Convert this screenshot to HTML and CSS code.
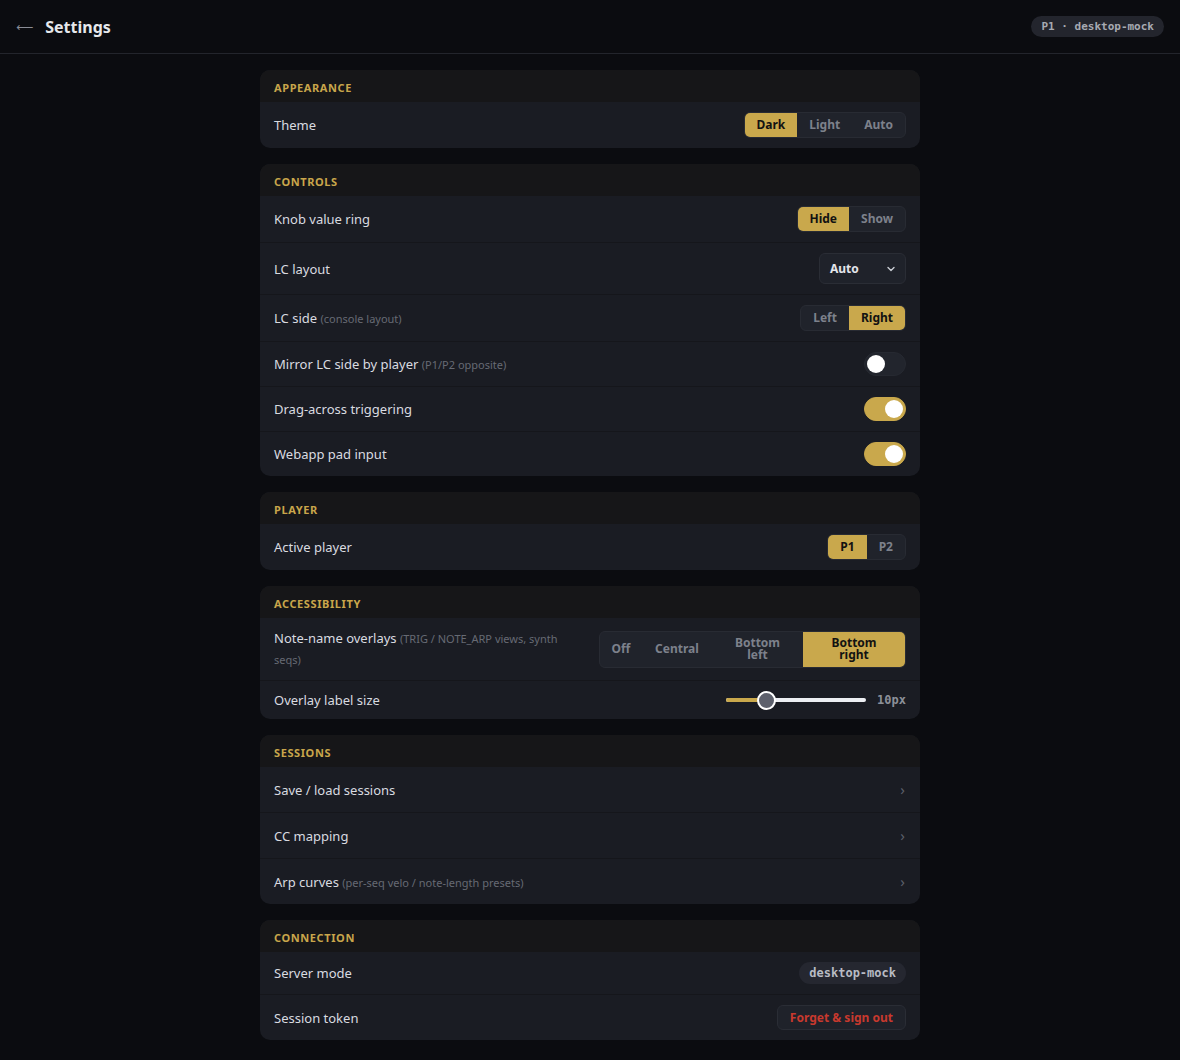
FILE: index.html
```html
<!DOCTYPE html>
<html lang="en">
<head>
<meta charset="utf-8">
<title>Settings</title>
<link rel="stylesheet" href="styles.css">
</head>
<body>
<header class="topbar">
  <div class="topbar-left">
    <span class="back">⟵</span>
    <h1 class="title">Settings</h1>
  </div>
  <span class="pill">P1 · desktop-mock</span>
</header>

<main class="page">
  <section class="card">
    <div class="card-head">Appearance</div>
    <div class="row">
      <div class="label">Theme</div>
      <div class="seg">
        <span class="seg-btn active">Dark</span>
        <span class="seg-btn">Light</span>
        <span class="seg-btn">Auto</span>
      </div>
    </div>
  </section>

  <section class="card">
    <div class="card-head">Controls</div>
    <div class="row">
      <div class="label">Knob value ring</div>
      <div class="seg">
        <span class="seg-btn active">Hide</span>
        <span class="seg-btn">Show</span>
      </div>
    </div>
    <div class="row">
      <div class="label">LC layout</div>
      <div class="select">
        <span>Auto</span>
        <svg class="chev-down" width="10" height="10" viewBox="0 0 10 10"><path d="M2 3.5 L5 6.5 L8 3.5" fill="none" stroke="#c9ccd3" stroke-width="1.4" stroke-linecap="round" stroke-linejoin="round"/></svg>
      </div>
    </div>
    <div class="row">
      <div class="label">LC side <span class="hint">(console layout)</span></div>
      <div class="seg">
        <span class="seg-btn">Left</span>
        <span class="seg-btn active">Right</span>
      </div>
    </div>
    <div class="row">
      <div class="label">Mirror LC side by player <span class="hint">(P1/P2 opposite)</span></div>
      <div class="toggle"><span class="knob"></span></div>
    </div>
    <div class="row">
      <div class="label">Drag-across triggering</div>
      <div class="toggle on"><span class="knob"></span></div>
    </div>
    <div class="row">
      <div class="label">Webapp pad input</div>
      <div class="toggle on"><span class="knob"></span></div>
    </div>
  </section>

  <section class="card">
    <div class="card-head">Player</div>
    <div class="row">
      <div class="label">Active player</div>
      <div class="seg">
        <span class="seg-btn active">P1</span>
        <span class="seg-btn">P2</span>
      </div>
    </div>
  </section>

  <section class="card">
    <div class="card-head">Accessibility</div>
    <div class="row">
      <div class="label label-wrap">Note-name overlays <span class="hint">(TRIG / NOTE_ARP views, synth seqs)</span></div>
      <div class="seg seg-wide">
        <span class="seg-btn w-off">Off</span>
        <span class="seg-btn w-central">Central</span>
        <span class="seg-btn w-bl">Bottom<br>left</span>
        <span class="seg-btn w-br active">Bottom<br>right</span>
      </div>
    </div>
    <div class="row row-slim">
      <div class="label">Overlay label size</div>
      <div class="slider-wrap">
        <div class="slider">
          <div class="slider-fill" style="width: 40px"></div>
          <div class="slider-thumb" style="left: 40px"></div>
        </div>
        <span class="mono-val">10px</span>
      </div>
    </div>
  </section>

  <section class="card">
    <div class="card-head">Sessions</div>
    <div class="row">
      <div class="label">Save / load sessions</div>
      <span class="chev">›</span>
    </div>
    <div class="row">
      <div class="label">CC mapping</div>
      <span class="chev">›</span>
    </div>
    <div class="row">
      <div class="label">Arp curves <span class="hint">(per-seq velo / note-length presets)</span></div>
      <span class="chev">›</span>
    </div>
  </section>

  <section class="card">
    <div class="card-head">Connection</div>
    <div class="row">
      <div class="label">Server mode</div>
      <span class="mode-pill">desktop-mock</span>
    </div>
    <div class="row">
      <div class="label">Session token</div>
      <span class="danger-btn">Forget &amp; sign out</span>
    </div>
  </section>
</main>
</body>
</html>
```

FILE: styles.css
```css
* { box-sizing: border-box; }

html, body {
  margin: 0;
  padding: 0;
  background: #0b0c10;
  color: #d9dbe0;
  font-family: "Noto Sans", "Open Sans", "DejaVu Sans", sans-serif;
}

/* top bar */
.topbar {
  height: 54px;
  display: flex;
  align-items: center;
  justify-content: space-between;
  padding: 0 16px;
  border-bottom: 1px solid #23252c;
  background: #0b0c10;
}
.topbar-left {
  display: flex;
  align-items: center;
  gap: 12px;
}
.back {
  color: #8a8d96;
  font-size: 12px;
  font-family: "DejaVu Sans", sans-serif;
  line-height: 1;
}
.title {
  margin: 0;
  font-size: 16px;
  font-weight: 700;
  color: #e6e8ec;
}
.pill {
  background: #23252d;
  color: #a7aab2;
  border-radius: 11px;
  padding: 3px 10px;
  font-family: "DejaVu Sans Mono", "Liberation Mono", monospace;
  font-size: 11px;
  font-weight: 700;
  line-height: 15px;
}

/* content column */
.page {
  width: 660px;
  margin: 0 auto;
  padding: 16px 0 20px;
  display: flex;
  flex-direction: column;
  gap: 16px;
}

.card {
  background: #1a1c23;
  border-radius: 10px;
  overflow: hidden;
}
.card-head {
  background: #161618;
  color: #c9a64b;
  font-size: 11px;
  font-weight: 700;
  letter-spacing: 0.6px;
  text-transform: uppercase;
  padding: 12px 14px 8px;
  line-height: 12px;
}

.row {
  display: flex;
  align-items: center;
  justify-content: space-between;
  gap: 14px;
  padding: 10px 14px;
  border-top: 1px solid #15161b;
}
.card-head + .row { border-top: none; }
.row-slim { padding-top: 9px; padding-bottom: 9px; }

.label {
  font-size: 13px;
  line-height: 20px;
  color: #d9dbe0;
  flex: 1 1 auto;
  min-width: 0;
}
.label-wrap { line-height: 21px; }
.hint {
  font-size: 11px;
  line-height: 1;
  color: #666a73;
}

/* segmented control */
.seg {
  display: flex;
  flex: none;
  background: #20232b;
  border: 1px solid #282b33;
  border-radius: 6px;
  overflow: hidden;
}
.seg-btn {
  padding: 4px 12px;
  font-size: 12px;
  font-weight: 700;
  line-height: 16px;
  color: #7d818b;
  text-align: center;
  display: flex;
  align-items: center;
  justify-content: center;
}
.seg-btn.active {
  background: #c9a84c;
  color: #121212;
}
.seg-wide { width: 307px; }
.seg-wide .seg-btn {
  line-height: 12.5px;
  padding: 5px 8px;
  height: 35px;
}
.w-off { width: 42px; }
.w-central { width: 70px; }
.w-bl { width: 91px; }
.w-br { width: 102px; }

/* select */
.select {
  flex: none;
  width: 87px;
  height: 31px;
  display: flex;
  align-items: center;
  justify-content: space-between;
  padding: 0 9px 0 10px;
  background: #1f222a;
  border: 1px solid #2a2d35;
  border-radius: 6px;
  font-size: 12px;
  font-weight: 700;
  color: #e3e5ea;
}

/* toggle switch */
.toggle {
  flex: none;
  width: 42px;
  height: 24px;
  border-radius: 12px;
  background: #22252d;
  border: 1px solid #262931;
  position: relative;
}
.toggle .knob {
  position: absolute;
  top: 2px;
  left: 2px;
  width: 18px;
  height: 18px;
  border-radius: 50%;
  background: #ffffff;
}
.toggle.on {
  background: #c9a84c;
  border-color: #c9a84c;
}
.toggle.on .knob {
  left: 20px;
}

/* slider */
.slider-wrap {
  flex: none;
  display: flex;
  align-items: center;
  gap: 11px;
}
.slider {
  position: relative;
  width: 140px;
  height: 4px;
  border-radius: 2px;
  background: #eceef2;
}
.slider-fill {
  position: absolute;
  left: 0;
  top: 0;
  bottom: 0;
  border-radius: 2px;
  background: #c9a84c;
}
.slider-thumb {
  position: absolute;
  top: 50%;
  width: 19px;
  height: 19px;
  margin-left: -9px;
  margin-top: -9.5px;
  border-radius: 50%;
  background: #5d606c;
  border: 2px solid #ffffff;
}
.mono-val {
  font-family: "DejaVu Sans Mono", "Liberation Mono", monospace;
  font-size: 12px;
  font-weight: 700;
  color: #8c9099;
}

/* chevrons */
.chev {
  color: #5b5f69;
  font-size: 15px;
  line-height: 25px;
  height: 25px;
  padding-right: 1px;
  display: flex;
  align-items: center;
}

/* connection */
.mode-pill {
  background: #252730;
  color: #b8bbc3;
  border-radius: 11px;
  padding: 3px 10px;
  font-family: "DejaVu Sans Mono", "Liberation Mono", monospace;
  font-size: 12px;
  font-weight: 700;
  line-height: 16px;
}
.danger-btn {
  background: #1f222a;
  border: 1px solid #2a2d35;
  border-radius: 6px;
  padding: 3px 12px;
  font-size: 12px;
  font-weight: 700;
  line-height: 17px;
  color: #c8392e;
}
```
